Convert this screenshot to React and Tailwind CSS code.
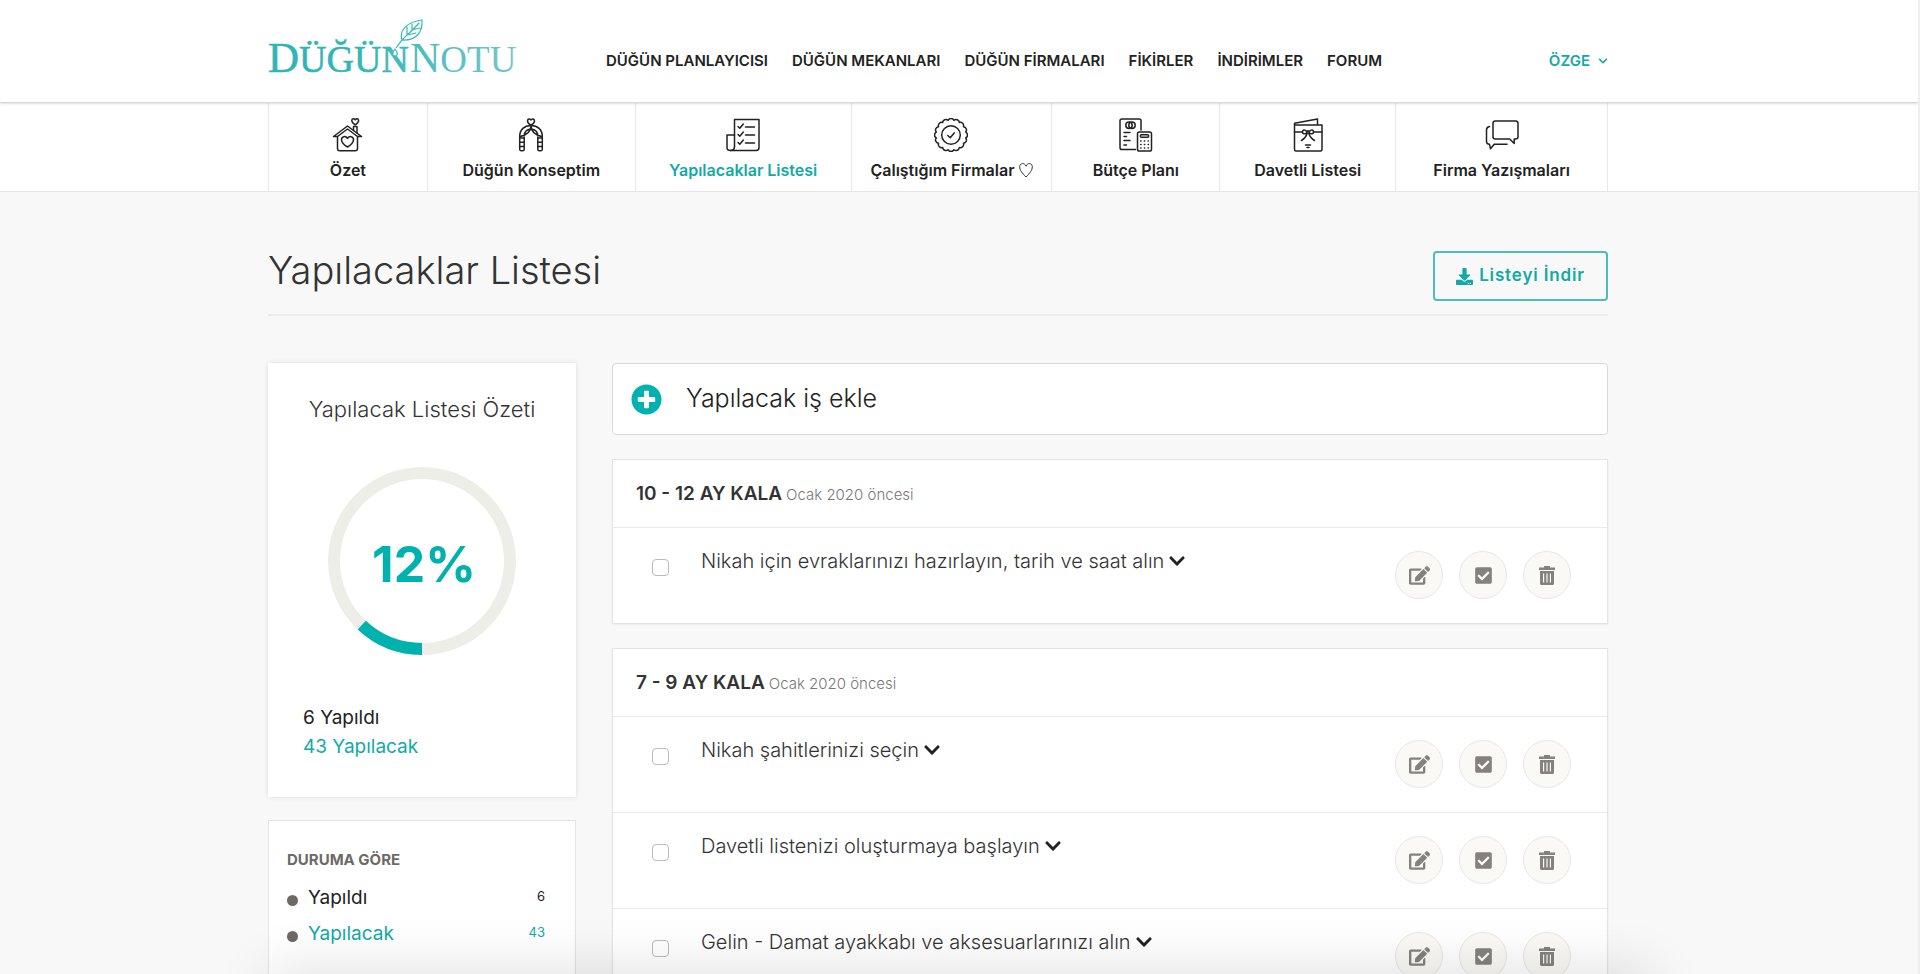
import { useState } from 'react'
import { FaCheckSquare, FaChevronDown, FaDownload, FaEdit, FaPlusCircle } from 'react-icons/fa'

const menu = ['DÜĞÜN PLANLAYICISI', 'DÜĞÜN MEKANLARI', 'DÜĞÜN FİRMALARI', 'FİKİRLER', 'İNDİRİMLER', 'FORUM']

const tabs = [
  { label: 'Özet', icon: HouseIcon },
  { label: 'Düğün Konseptim', icon: ArchIcon },
  { label: 'Yapılacaklar Listesi', icon: ListIcon, active: true },
  { label: 'Çalıştığım Firmalar', icon: BadgeIcon, heart: true },
  { label: 'Bütçe Planı', icon: BudgetIcon },
  { label: 'Davetli Listesi', icon: InviteIcon },
  { label: 'Firma Yazışmaları', icon: ChatIcon },
]

const groups = [
  {
    title: '10 - 12 AY KALA',
    note: 'Ocak 2020 öncesi',
    tasks: ['Nikah için evraklarınızı hazırlayın, tarih ve saat alın'],
  },
  {
    title: '7 - 9 AY KALA',
    note: 'Ocak 2020 öncesi',
    tasks: [
      'Nikah şahitlerinizi seçin',
      'Davetli listenizi oluşturmaya başlayın',
      'Gelin - Damat ayakkabı ve aksesuarlarınızı alın',
    ],
  },
]

// scalloped edge of the badge, 16 bumps
const scallops = Array.from({ length: 17 }, (_, i) => {
  const a = (i * Math.PI) / 8 + Math.PI / 16
  const x = (17 + 15 * Math.cos(a)).toFixed(2)
  const y = (17 + 15 * Math.sin(a)).toFixed(2)
  return i === 0 ? `M${x} ${y}` : `A3.3 3.3 0 0 1 ${x} ${y}`
}).join('')

function Icon({ children }) {
  return (
    <svg
      viewBox="0 0 34 34"
      className="h-[34px] w-[34px]"
      fill="none"
      stroke="#222"
      strokeWidth="1.5"
      strokeLinecap="round"
      strokeLinejoin="round"
      aria-hidden="true"
    >
      {children}
    </svg>
  )
}

function HouseIcon() {
  return (
    <Icon>
      <path d="M6.500 18.500v12q0 2.300 2.300 2.300h15.400q2.300 0 2.300-2.300v-12" />
      <path d="M2.500 18.500 16.500 8l14 10.500h-4L16.500 11 6.500 18.500z" />
      <path d="M22.500 12.500V8.500h3.500v6.500" />
      <path d="M24.200 6.800c-2.400-1.600-3.400-2.900-3.400-4.300 0-2 2.400-2.400 3.400-.7 1-1.700 3.400-1.300 3.400.7 0 1.400-1 2.700-3.400 4.300z" />
      <path d="M16.500 29c-4-2.500-6-4.800-6-7.300 0-3.500 4.400-4.200 6-1.200 1.600-3 6-2.300 6 1.200 0 2.500-2 4.800-6 7.300z" />
    </Icon>
  )
}

function ArchIcon() {
  return (
    <Icon>
      <path d="M17 7.200C14.400 5.500 13.500 4.300 13.500 2.900c0-2.300 2.700-2.600 3.500-.9.800-1.700 3.500-1.400 3.500.9 0 1.400-.9 2.600-3.500 4.300z" />
      <path d="M5.700 18.500C5.700 11.500 10.500 7.500 17 7.500s11.300 4 11.300 11v12.700q0 1.600-1.600 1.600h-1.300q-1.600 0-1.600-1.600V19" />
      <path d="M5.700 18.500v12.700q0 1.600 1.600 1.600h1.300q1.600 0 1.600-1.600V19" />
      <path d="M17 7.500c0 6-3.500 9.500-11.300 11.200M17 7.500c0 6 3.500 9.500 11.300 11.200M10.200 17.500c.3-3.500 2.800-6 6.300-6.500M23.800 17.500c-.3-3.500-2.800-6-6.300-6.500" />
      <path d="M5.700 20h4.500M5.700 24.300h4.500M5.700 28.600h4.500M23.800 20h4.500M23.800 24.300h4.500M23.800 28.600h4.500" />
    </Icon>
  )
}

function ListIcon() {
  return (
    <Icon>
      <path d="M8.500 28.500V1.500h24.500v28q0 3-3 3H4.500" />
      <path d="M8.500 17H1v12.500q0 3 3.500 3c3 0 4-1.500 4-4" />
      <path d="m12 8.500 1.800 1.800L17.300 6M12 16.500l1.800 1.800 3.500-4.300M12 24.500l1.800 1.800 3.500-4.300M19.500 9h9M19.500 17h9M19.500 25h9" />
    </Icon>
  )
}

function BadgeIcon() {
  return (
    <Icon>
      <path d={scallops} />
      <circle cx="17" cy="17" r="9.300" />
      <path d="m13.800 17.500 2.400 2.200 4-4.800" />
    </Icon>
  )
}

function BudgetIcon() {
  return (
    <Icon>
      <path d="M16.500 31.500H2.800Q1 31.500 1 29.700V2.800Q1 1 2.800 1h17.400Q22 1 22 2.800V12" />
      <circle cx="10" cy="7.200" r="3.200" />
      <circle cx="13" cy="7.200" r="3.200" />
      <path d="M5 14.500h6M5 18.500h2.500M5 22.500h6M5 27h2.500" />
      <rect x="18.500" y="14" width="14" height="19" rx="1.800" />
      <rect x="21.300" y="16.700" width="8.400" height="2.600" rx="1.200" />
      <path d="M21.700 23h.3M25.400 23h.3M29.100 23h.3M21.700 26.500h.3M25.400 26.500h.3M29.100 26.500h.3M21.700 30h.3M25.400 30h.3M29.100 30h.3" />
    </Icon>
  )
}

function InviteIcon() {
  return (
    <Icon>
      <path d="M3.500 7v24.500q0 1.500 1.500 1.500h24.500q1.500 0 1.500-1.500V7zM3.500 7V5.300L26.500 1v5.500" />
      <path d="M3.500 14h8M22.500 14H31M14.500 27h5M16 29.500h2" />
      <circle cx="17" cy="14" r="1.300" />
      <path d="M15.700 13.500c-2.200-2.500-4.200-1.800-4.200.4s2 2.500 4.200.9M18.300 13.500c2.200-2.500 4.200-1.800 4.200.4s-2 2.500-4.200.9M16 15.800c-1 3.500-2.800 5.200-5.500 6.700M18 15.800c1 3.500 2.800 5.200 5.500 6.700" />
    </Icon>
  )
}

function ChatIcon() {
  return (
    <Icon>
      <path d="M10.300 3h20.400q2.300 0 2.300 2.300v13.400q0 2.300-2.300 2.300h-1.500v4.500L24.700 21H10.300Q8 21 8 18.700V5.300Q8 3 10.300 3z" />
      <path d="M4.500 8.500Q1.500 9 1.500 12v11.500q0 2.500 3 2.800l1 4.500 3.700-4.500H22" />
    </Icon>
  )
}

function Logo() {
  return (
    <svg viewBox="0 0 256 72" className="h-[72px] w-[256px] overflow-visible" role="img" aria-label="Düğün Notu">
      <defs>
        <linearGradient id="teal" x1="0" x2="252" y1="0" y2="0" gradientUnits="userSpaceOnUse">
          <stop offset="0.300" stopColor="#2fb5b5" />
          <stop offset="1" stopColor="#78c6cd" />
        </linearGradient>
      </defs>
      <g fill="url(#teal)" fontFamily="'Liberation Serif', serif">
        <text x="0" y="54" fontSize="43" stroke="#2fb5b5" strokeWidth="0.500">
          D<tspan fontSize="38">ÜĞÜN</tspan>
        </text>
        <text x="142" y="54" fontSize="42">
          N<tspan fontSize="37">OTU</tspan>
        </text>
      </g>
      <g fill="none" stroke="#3db8b8" strokeWidth="1.200" strokeLinecap="round">
        <path d="M128 30c3-4 5-7 6-8-3-9 4-18 20-20 1 13-7 21-20 20zM134 22c5-5 12-11 17-17M139 17V9M144 12V6M139 17l9-2M144 12l8-2" />
        <path d="M127 31c-4 5-2 7 0 7s4-2 0-7z" fill="#fff" />
      </g>
    </svg>
  )
}

function TrashIcon() {
  return (
    <svg viewBox="0 0 16 19" className="h-[19px] w-4" fill="currentColor" aria-hidden="true">
      <path d="M5 0h6v1.500h5V4H0V1.500h5z" />
      <path fillRule="evenodd" d="M1 5h14v12.500q0 1.500-1.500 1.500h-11Q1 19 1 17.500zM4 7.500v9h1.200v-9zm3.400 0v9h1.200v-9zm3.400 0v9H12v-9z" />
    </svg>
  )
}

function RoundButton({ label, children }) {
  return (
    <button
      aria-label={label}
      className="flex h-12 w-12 items-center justify-center rounded-full border border-[#e8e7e4] bg-[#faf9f6] text-[#85817e]"
    >
      {children}
    </button>
  )
}

function Task({ text }) {
  const [done, setDone] = useState(false)

  return (
    <li className="flex h-24 items-start border-t border-[#e9e9e9] pr-9 pl-[39px]">
      <label className="flex flex-1 items-start gap-8 pt-[19px]">
        <input
          type="checkbox"
          checked={done}
          onChange={() => setDone(!done)}
          className="mt-3 h-[17px] w-[17px] appearance-none rounded border border-[#bbb] bg-white checked:bg-[#00b2ae]"
        />
        <span className="flex items-center gap-1 text-xl leading-7 font-light text-[#333]">
          {text}
          <FaChevronDown size={18} className="text-[#222]" />
        </span>
      </label>
      <div className="flex gap-4 pt-[23px]">
        <RoundButton label="Düzenle"><FaEdit size={21} /></RoundButton>
        <RoundButton label="Tamamla"><FaCheckSquare size={19} /></RoundButton>
        <RoundButton label="Sil"><TrashIcon /></RoundButton>
      </div>
    </li>
  )
}

export default function App() {
  return (
    <div className="h-screen overflow-hidden border-r-2 border-[#efefef] bg-[#f8f8f8] font-['Inter',sans-serif] text-[#222]">
      <header className="relative border-b border-[#d9d9d9] bg-white pr-[42px] shadow-sm">
        <div className="mx-auto flex h-[102px] max-w-[1340px] items-start">
          <a href="#" className="pt-[18px]"><Logo /></a>
          <nav className="ml-[82px] flex gap-6 pt-[51px] text-[15px] leading-5 font-semibold">
            {menu.map(item => (
              <a key={item} href="#">{item}</a>
            ))}
          </nav>
          <button className="ml-auto flex items-center gap-2 pt-[51px] text-[15px] leading-5 font-semibold text-[#12aaa6]">
            ÖZGE <FaChevronDown size={10} />
          </button>
        </div>
      </header>

      <nav className="border-b border-[#e6e6e6] bg-white pr-[42px]">
        <div className="mx-auto grid h-[88px] max-w-[1340px] grid-cols-[159fr_208fr_216fr_201fr_168fr_176fr_212fr] border-l border-[#e9e9e9]">
          {tabs.map(({ label, icon: TabIcon, active, heart }) => (
            <a key={label} href="#" className="flex flex-col items-center gap-1.5 border-r border-[#e9e9e9] pt-[15px]">
              <TabIcon />
              <span className={active ? 'text-base font-semibold text-[#12aaa6]' : 'flex items-center gap-1 text-base font-semibold'}>
                {label}
                {heart && (
                  <svg viewBox="0 0 14 16" className="h-4 w-[14px]" fill="none" stroke="#333" aria-hidden="true">
                    <path d="M7 15C3 11 .700 8 .700 4.800.700 1 5.500.200 7 4.200 8.500.200 13.300 1 13.300 4.800 13.300 8 11 11 7 15z" />
                  </svg>
                )}
              </span>
            </a>
          ))}
        </div>
      </nav>

      <main className="pr-[42px]">
        <div className="mx-auto max-w-[1340px]">
          <div className="flex h-[124px] items-start justify-between border-b-2 border-[#ebebe9]">
            <h1 className="pt-[55px] text-[38px] leading-[46px] font-light text-[#333]">Yapılacaklar Listesi</h1>
            <button className="mt-[59px] flex h-[50px] w-[175px] items-center justify-center gap-1.5 rounded border-2 border-[#4fbdb9] text-[17px] font-semibold tracking-wider text-[#12aaa6]">
              <FaDownload size={17} /> Listeyi İndir
            </button>
          </div>

          <div className="mt-[47px] flex items-start gap-9">
            <aside className="flex w-[308px] shrink-0 flex-col gap-[23px]">
              <section className="h-[434px] bg-white px-[35px] pt-8 shadow-[0_0_5px_rgba(0,0,0,0.12)]">
                <h2 className="text-center text-[22px] leading-7 font-light text-[#333]">Yapılacak Listesi Özeti</h2>
                <div className="mt-11 grid place-items-center">
                  <svg viewBox="0 0 188 188" className="col-start-1 row-start-1 h-[188px] w-[188px]" fill="none" strokeWidth="12" aria-hidden="true">
                    <circle cx="94" cy="94" r="88" stroke="#eeeee8" />
                    <circle cx="94" cy="94" r="88" stroke="#00b2ae" pathLength="100" strokeDasharray="12 88" transform="rotate(90 94 94)" />
                  </svg>
                  <strong className="col-start-1 row-start-1 pt-1.5 pl-1 text-[50px] leading-[60px] font-bold text-[#00b2ae]">12%</strong>
                </div>
                <p className="mt-12 text-[19px] leading-[29px]">6 Yapıldı</p>
                <p className="text-[19px] leading-[29px] text-[#12aaa6]">43 Yapılacak</p>
              </section>

              <section className="h-[300px] border border-[#e3e3e3] bg-white pt-[29px] pr-[30px] pl-[18px]">
                <h3 className="text-[15px] leading-5 font-bold text-[#6d6a66]">DURUMA GÖRE</h3>
                <ul className="mt-[10px] text-[19px] leading-9">
                  <li className="flex items-center gap-[10px]">
                    <span className="mt-1 h-[11px] w-[11px] rounded-full bg-[#6d6a66]" />
                    <a href="#" className="flex-1">Yapıldı</a>
                    <span className="pb-1 text-[13px] leading-7">6</span>
                  </li>
                  <li className="flex items-center gap-[10px] text-[#12aaa6]">
                    <span className="mt-1 h-[11px] w-[11px] rounded-full bg-[#6d6a66]" />
                    <a href="#" className="flex-1">Yapılacak</a>
                    <span className="pb-1 text-[13px] leading-7">43</span>
                  </li>
                </ul>
              </section>
            </aside>

            <div className="flex flex-1 flex-col gap-6">
              <button className="flex h-[72px] items-center gap-6 rounded border border-[#d9d9d9] bg-white px-[18px] text-[25px] font-light">
                <FaPlusCircle size={31} className="text-[#00b2ae]" />
                Yapılacak iş ekle
              </button>

              {groups.map(group => (
                <section key={group.title} className="border border-[#e3e3e3] bg-white shadow-xs">
                  <h2 className="flex h-[67px] items-baseline gap-1 px-[23px] pt-5 text-[19px] leading-7 font-semibold text-[#333]">
                    {group.title}
                    <small className="text-[15px] font-light text-[#777]">{group.note}</small>
                  </h2>
                  <ul>
                    {group.tasks.map(task => (
                      <Task key={task} text={task} />
                    ))}
                  </ul>
                </section>
              ))}
            </div>
          </div>
        </div>
      </main>

      <div className="pointer-events-none fixed inset-x-[270px] -bottom-10 h-10 shadow-[0_0_56px_rgba(0,0,0,0.16)]" />
    </div>
  )
}
